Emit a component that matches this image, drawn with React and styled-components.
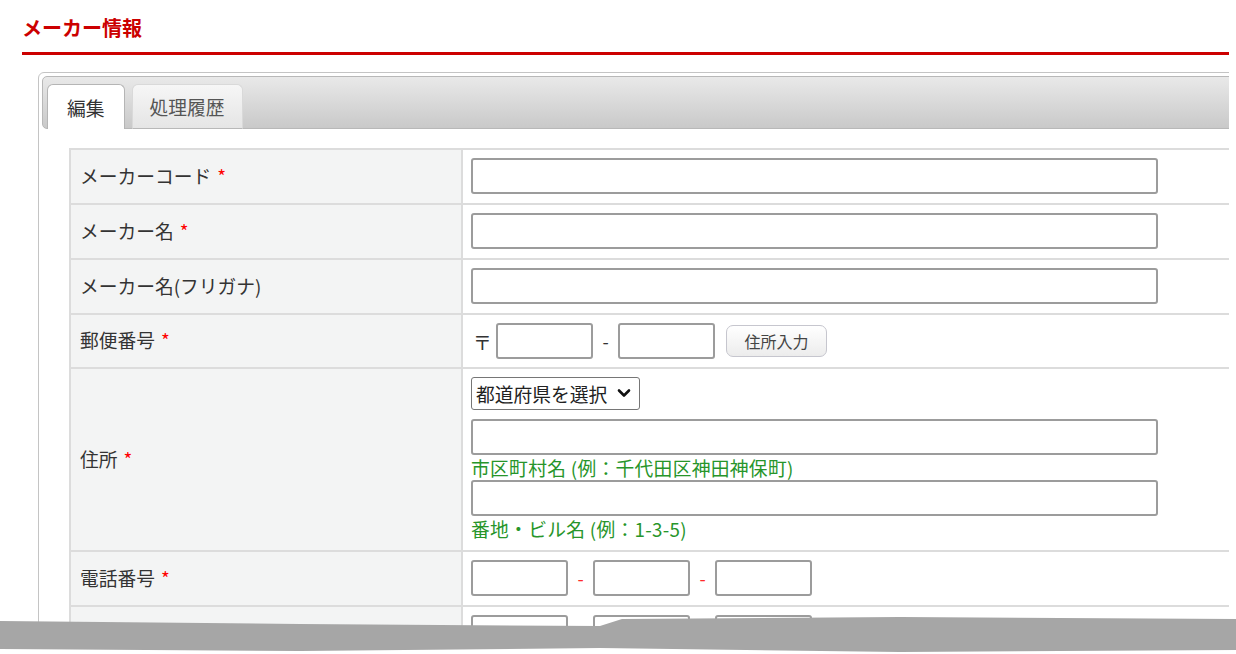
import React from 'react'
import styled, { createGlobalStyle } from 'styled-components'

const GlobalStyle = createGlobalStyle`
html,body{margin:0;background:#fff;}
body{font-family:"Noto Sans CJK JP","Noto Sans",sans-serif;color:#333;}
*{box-sizing:border-box;}
`

const Screen = styled.div`
width:1236px;height:654px;position:relative;overflow:hidden;
`
const Page = styled.div`
width:1229px;height:654px;overflow:hidden;
`
const Inner = styled.div`
width:1500px;padding:14px 0 0 22px;
`
const Title = styled.h1`
margin:0;font-size:20px;font-weight:bold;color:#cc0000;line-height:28px;
padding-bottom:10px;border-bottom:3px solid #cc0000;
`
const Panel = styled.div`
margin:17px 0 0 16px;border:1px solid #c4c4c4;border-radius:6px;padding:3px;background:#fff;
`
const TabBar = styled.div`
height:53px;border:1px solid #b8b8b8;border-radius:5px;
background:linear-gradient(#e9e9e9,#c9c9c9);
display:flex;align-items:flex-end;gap:7px;padding:0 4px;
`
const Tab = styled.div`
height:45px;margin-bottom:-1px;padding:0 ${p => p.$active ? 19 : 17}px;display:flex;align-items:center;
font-size:18.75px;border-radius:6px 6px 0 0;
border:1px solid ${p => p.$active ? '#b5b5b5' : '#d9d9d9'};
border-bottom:${p => p.$active ? 'none' : '1px solid #b8b8b8'};
background:${p => p.$active ? '#fff' : 'linear-gradient(#f6f6f6,#e5e5e5)'};
color:${p => p.$active ? '#333' : '#555'};
`
const Content = styled.div`
padding:19px 0 0 27px;
`
const Table = styled.table`
border-collapse:collapse;width:1300px;
th,td{border:2px solid #dcdcdc;}
`
const Label = styled.th`
width:392px;background:#f3f4f4;text-align:left;font-weight:normal;
padding:0 9px 3px;font-size:18.75px;color:#333;vertical-align:middle;
`
const Cell = styled.td`
padding:8px 8px ${p => p.$tight ? 8 : 9}px;vertical-align:top;font-size:18.75px;
`
const Req = styled.span`
color:#ff0000;margin-left:6px;
`
const TextInput = styled.input`
display:block;width:687px;height:36px;border:2px solid #9c9c9c;border-radius:3px;
font-size:16px;background:#fff;padding:0 4px;
`
const Inline = styled.div`
display:flex;align-items:center;
`
const Mark = styled.span`
width:25px;padding-left:2px;font-size:18.75px;
`
const Dash = styled.span`
width:25px;text-align:center;color:${p => p.$red ? '#ff2a2a' : '#333'};font-size:18px;
`
const SmallInput = styled(TextInput)`
width:97px;
`
const Button = styled.button`
margin-left:11px;width:101px;height:32px;border:1px solid #c6c6ce;border-radius:7px;
background:linear-gradient(#ffffff,#ececec);font-family:inherit;font-size:16px;color:#444;
padding:0;
`
const SelectWrap = styled.div`
position:relative;width:169px;margin-bottom:9px;
`
const Select = styled.select`
appearance:none;display:block;width:169px;height:33px;border:1px solid #767676;border-radius:3px;
font-family:inherit;font-size:18.75px;color:#222;background:#fff;padding:0 4px;
`
const Chevron = styled.svg`
position:absolute;right:9px;top:11px;pointer-events:none;
`
const Hint = styled.div`
color:#27952a;font-size:18.75px;line-height:25px;height:25px;letter-spacing:0.3px;
`

const Band = styled.svg`
position:absolute;left:0;top:0;
`

function Phone(){
  return (
    <Inline>
      <SmallInput />
      <Dash $red>-</Dash>
      <SmallInput />
      <Dash $red>-</Dash>
      <SmallInput />
    </Inline>
  )
}

export default function App(){
  return (
    <Screen>
      <GlobalStyle />
      <Page>
        <Inner>
          <Title>メーカー情報</Title>
          <Panel>
            <TabBar>
              <Tab $active>編集</Tab>
              <Tab>処理履歴</Tab>
            </TabBar>
            <Content>
              <Table>
                <tbody>
                  <tr>
                    <Label>メーカーコード<Req>*</Req></Label>
                    <Cell><TextInput /></Cell>
                  </tr>
                  <tr>
                    <Label>メーカー名<Req>*</Req></Label>
                    <Cell><TextInput /></Cell>
                  </tr>
                  <tr>
                    <Label>メーカー名(フリガナ)</Label>
                    <Cell><TextInput /></Cell>
                  </tr>
                  <tr>
                    <Label>郵便番号<Req>*</Req></Label>
                    <Cell $tight>
                      <Inline>
                        <Mark>〒</Mark>
                        <SmallInput />
                        <Dash>-</Dash>
                        <SmallInput />
                        <Button>住所入力</Button>
                      </Inline>
                    </Cell>
                  </tr>
                  <tr>
                    <Label>住所<Req>*</Req></Label>
                    <Cell>
                      <SelectWrap>
                        <Select defaultValue="">
                          <option value="">都道府県を選択</option>
                        </Select>
                        <Chevron width="14" height="10" viewBox="0 0 14 10">
                          <path d="M2 2.5 L7 7.5 L12 2.5" fill="none" stroke="#111" strokeWidth="2.6" strokeLinecap="round" strokeLinejoin="round" />
                        </Chevron>
                      </SelectWrap>
                      <TextInput />
                      <Hint>市区町村名 (例：千代田区神田神保町)</Hint>
                      <TextInput />
                      <Hint>番地・ビル名 (例：1-3-5)</Hint>
                    </Cell>
                  </tr>
                  <tr>
                    <Label>電話番号<Req>*</Req></Label>
                    <Cell><Phone /></Cell>
                  </tr>
                  <tr>
                    <Label>FAX</Label>
                    <Cell><Phone /></Cell>
                  </tr>
                </tbody>
              </Table>
            </Content>
          </Panel>
        </Inner>
      </Page>
      <Band width="1236" height="654" viewBox="0 0 1236 654">
        <polygon fill="#ffffff" points="0,640 1236,640 1236,654 0,654" />
        <polygon fill="#a6a6a6" points="0,621 300,624 600,626 622,619 900,617 1236,619 1236,650 900,652 600,648 300,651 0,649" />
      </Band>
    </Screen>
  )
}
